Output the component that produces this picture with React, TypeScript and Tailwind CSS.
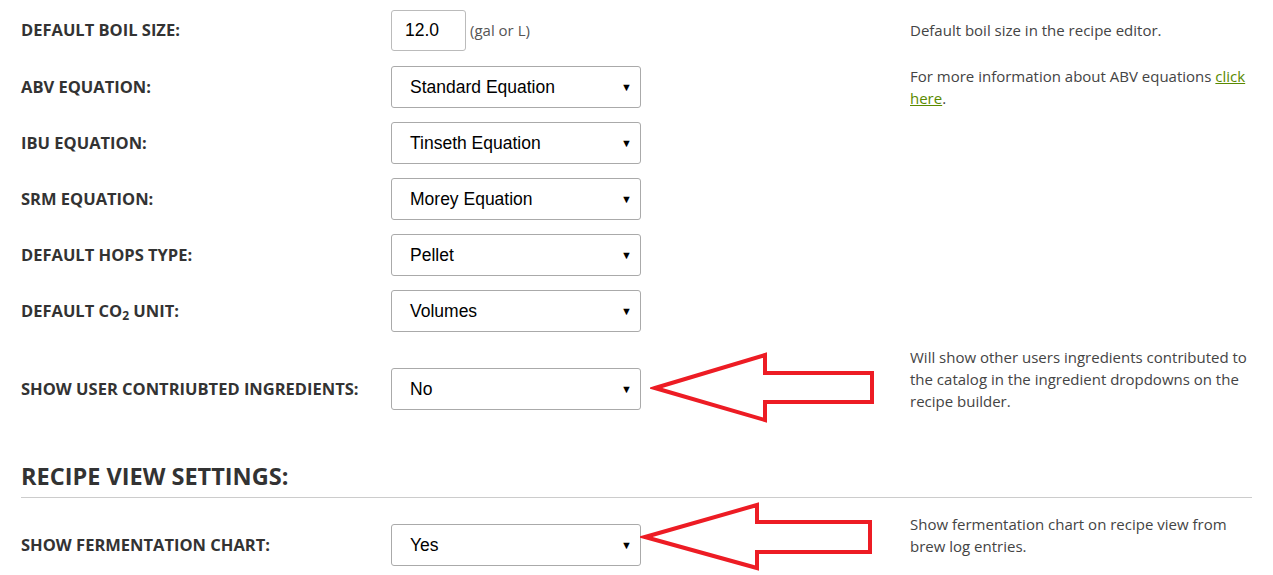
import React from 'react'

const label = "font-['Open_Sans',sans-serif] font-bold text-[16.5px] text-[#333] uppercase"
const desc = "font-['Open_Sans',sans-serif] text-[15px] leading-[22px] text-[#444]"

const Select = ({ value }: { value: string }) => {
  return (
    <div className="flex items-center justify-between w-[250px] h-[42px] pl-[18px] pr-[8px] border border-[#aaa] rounded-[3px] bg-white font-['Liberation_Sans',Arial,sans-serif] text-[17.5px] text-black">
      <span>{value}</span>
      <span className="text-[11px] leading-none">▼</span>
    </div>
  )
}

const Row = ({
  name,
  control,
  note,
  first,
}: {
  name: React.ReactNode
  control: React.ReactNode
  note?: React.ReactNode
  first?: boolean
}) => {
  return (
    <div className={`grid grid-cols-[370px_519px_342px] items-center ${first ? 'h-[58px]' : 'h-14'}`}>
      <div className={label}>{name}</div>
      <div>{control}</div>
      <div className={desc}>{note}</div>
    </div>
  )
}

const Arrow = ({ className, points }: { className: string; points: string }) => (
  <svg className={`absolute ${className}`} width="236" height="76" viewBox="0 0 236 76">
    <polygon points={points} fill="none" stroke="#ed1c24" strokeWidth="4" strokeLinejoin="miter" />
  </svg>
)

export default function App() {
  return (
    <div className="relative bg-white w-[1273px] h-[575px] overflow-hidden pl-[21px] pt-[1px]">
      <Row
        first
        name="Default Boil Size:"
        control={
          <div className="flex items-center gap-[4px]">
            <div className="w-[75px] h-[41px] border border-[#bbb] rounded-[3px] flex items-center pl-[13px] font-['Liberation_Sans',Arial,sans-serif] text-[17.5px] text-black">
              12.0
            </div>
            <span className="font-['Open_Sans',sans-serif] text-[15px] text-[#555]">(gal or L)</span>
          </div>
        }
        note="Default boil size in the recipe editor."
      />
      <Row
        name="ABV Equation:"
        control={<Select value="Standard Equation" />}
        note={
          <>
            For more information about ABV equations{' '}
            <a href="#" className="text-[#5a8a00] underline">
              click here
            </a>
            .
          </>
        }
      />
      <Row name="IBU Equation:" control={<Select value="Tinseth Equation" />} />
      <Row name="SRM Equation:" control={<Select value="Morey Equation" />} />
      <Row name="Default Hops Type:" control={<Select value="Pellet" />} />
      <Row
        name={
          <>
            Default CO<sub className="text-[12px]">2</sub> Unit:
          </>
        }
        control={<Select value="Volumes" />}
      />
      <div className="grid grid-cols-[370px_519px_342px] items-center min-h-[100px]">
        <div className={label}>Show User Contriubted Ingredients:</div>
        <div>
          <Select value="No" />
        </div>
        <div className={`${desc} mb-5`}>
          Will show other users ingredients contributed to the catalog in the ingredient dropdowns on the recipe builder.
        </div>
      </div>

      <div className="mt-[22px] w-[1231px] border-b border-[#ccc] pb-[6px]">
        <h2 className="font-['Open_Sans',sans-serif] font-bold text-[23.5px] leading-[30px] text-[#333] uppercase">
          Recipe View Settings:
        </h2>
      </div>

      <div className="mt-[15px] grid grid-cols-[370px_519px_342px] items-center">
        <div className={label}>Show Fermentation Chart:</div>
        <div>
          <Select value="Yes" />
        </div>
        <div className={`${desc} mb-5`}>Show fermentation chart on recipe view from brew log entries.</div>
      </div>

      <Arrow className="left-[650px] top-[350px]" points="5,38 115,5 115,23 222,23 222,52 115,52 115,70" />
      <Arrow className="left-[640px] top-[500px]" points="5,37 117,5 117,22 230,22 230,52 117,52 117,68" />
    </div>
  )
}
